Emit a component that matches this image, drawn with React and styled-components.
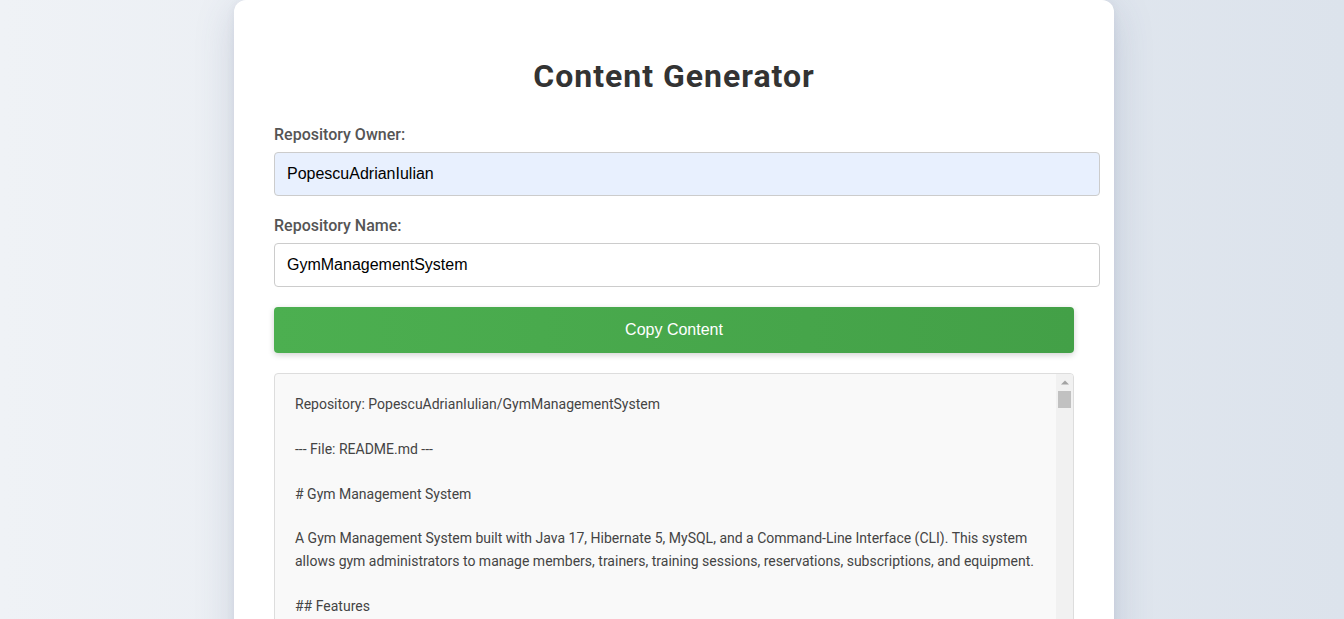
import React from "react";
import styled, { createGlobalStyle } from "styled-components";

const GlobalStyle = createGlobalStyle`
  html, body { margin: 0; padding: 0; }
  body {
    font-family: Roboto, "Noto Sans", sans-serif;
    background: linear-gradient(90deg, #eff2f6 0%, #e4e9f0 60%, #dce3ec 100%);
    min-height: 100vh;
  }
`;

const Page = styled.div`
  display: flex;
  justify-content: center;
  padding: 0 0 40px 4px;
`;

const Card = styled.div`
  width: 800px;
  background: #fff;
  border-radius: 12px;
  padding: 40px;
  box-shadow: 0 10px 40px rgba(60, 80, 120, 0.18), 0 2px 8px rgba(60, 80, 120, 0.08);
`;

const Title = styled.h1`
  margin: 17px 0 30px;
  text-align: center;
  font-family: Roboto, sans-serif;
  font-weight: 700;
  font-size: 32px;
  letter-spacing: 1px;
  color: #333;
`;

const Field = styled.div`
  margin-bottom: 20px;
`;

const Label = styled.label`
  display: block;
  margin-bottom: 8px;
  font-family: Roboto, sans-serif;
  font-weight: 500;
  font-size: 16px;
  color: #555;
`;

const Input = styled.input`
  display: block;
  width: 100%;
  height: 18px;
  padding: 12px;
  border: 1px solid #ccc;
  border-radius: 4px;
  font-family: "Liberation Sans", Arial, sans-serif;
  font-size: 16px;
  color: #000;
  background: ${(p) => (p.$filled ? "#e8f0fe" : "#fff")};
  box-sizing: content-box;
  outline: none;
`;

const Button = styled.button`
  display: block;
  width: 100%;
  height: 46px;
  border: none;
  border-radius: 4px;
  background: linear-gradient(90deg, #4caf50 0%, #43a047 100%);
  color: #fff;
  font-family: "Liberation Sans", Arial, sans-serif;
  font-size: 16px;
  box-shadow: 0 2px 6px rgba(0, 0, 0, 0.18);
  cursor: pointer;
  margin-bottom: 20px;
`;

const OutputBox = styled.div`
  display: flex;
  border: 1px solid #ddd;
  border-radius: 4px;
  background: #f9f9f9;
  height: 500px;
  overflow: hidden;
`;

const OutputText = styled.pre`
  flex: 1;
  margin: 0;
  padding: 19px 20px 20px;
  font-family: Roboto, sans-serif;
  font-size: 14px;
  line-height: 22.4px;
  color: #444;
  white-space: pre-wrap;
  overflow: hidden;
`;

const ScrollRail = styled.div`
  width: 17px;
  flex: none;
  background: #f1f1f1;
  display: flex;
  flex-direction: column;
`;

const ScrollArrow = styled.div`
  height: 17px;
  display: flex;
  align-items: center;
  justify-content: center;
`;

const ScrollThumb = styled.div`
  height: 17px;
  margin: 0 2px;
  background: #c1c1c1;
`;

const body = `Repository: PopescuAdrianIulian/GymManagementSystem

--- File: README.md ---

# Gym Management System

A Gym Management System built with Java 17, Hibernate 5, MySQL, and a Command-Line Interface (CLI). This system allows gym administrators to manage members, trainers, training sessions, reservations, subscriptions, and equipment.

## Features

- Member management (create, update, delete, list)
- Trainer management
- Training session scheduling
- Reservations for training sessions
- Subscription plans and payments
- Equipment inventory tracking
`;

export default function App() {
  return (
    <>
      <GlobalStyle />
      <Page>
        <Card>
          <Title>Content Generator</Title>
          <Field>
            <Label>Repository Owner:</Label>
            <Input $filled defaultValue="PopescuAdrianIulian" />
          </Field>
          <Field>
            <Label>Repository Name:</Label>
            <Input defaultValue="GymManagementSystem" />
          </Field>
          <Button>Copy Content</Button>
          <OutputBox>
            <OutputText>{body}</OutputText>
            <ScrollRail>
              <ScrollArrow>
                <svg width="8" height="5" viewBox="0 0 8 5">
                  <path d="M0 4.5 L4 0.5 L8 4.5 Z" fill="#a3a3a3" />
                </svg>
              </ScrollArrow>
              <ScrollThumb />
            </ScrollRail>
          </OutputBox>
        </Card>
      </Page>
    </>
  );
}
